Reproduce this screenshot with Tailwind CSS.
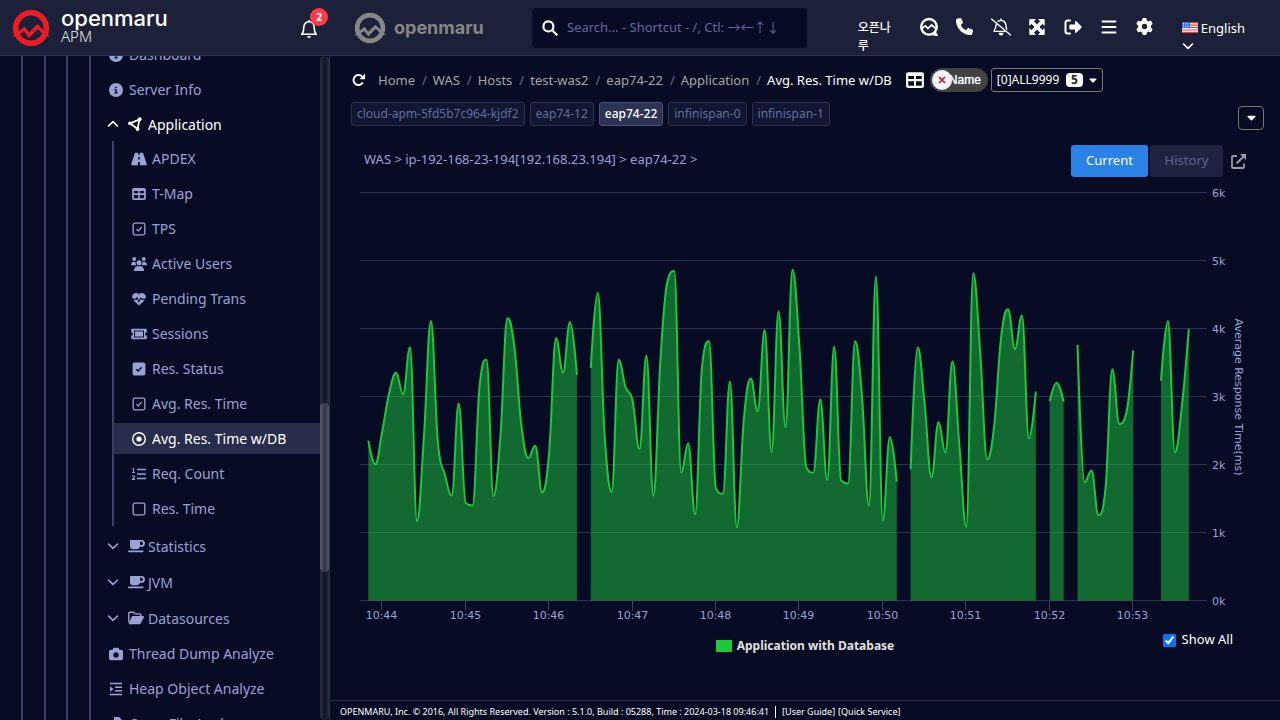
<!DOCTYPE html>
<html lang="en">
<head>
    <meta charset="UTF-8">
    <meta name="viewport" content="width=device-width, initial-scale=1.0">
    <title>OPENMARU APM - Avg. Res. Time w/DB</title>
    <script src="https://cdn.jsdelivr.net/npm/@tailwindcss/browser@4"></script>
</head>
<body class="h-screen flex flex-col overflow-hidden bg-[#070c24] text-white text-[13px] font-['Noto_Sans','Noto_Sans_CJK_KR',sans-serif]">

    <!-- Shared icons -->
    <svg class="hidden">
        <symbol id="i-info" viewBox="0 0 512 512"><path d="M256 512A256 256 0 1 0 256 0a256 256 0 1 0 0 512zM216 336h24V272H216c-13.3 0-24-10.7-24-24s10.7-24 24-24h48c13.3 0 24 10.7 24 24v88h8c13.3 0 24 10.7 24 24s-10.7 24-24 24H216c-13.3 0-24-10.7-24-24s10.7-24 24-24zm40-208a32 32 0 1 1 0 64 32 32 0 1 1 0-64z"/></symbol>
        <symbol id="i-down" viewBox="0 0 12 12"><path d="M1.5 4 6 8.3 10.5 4" fill="none" stroke="currentColor" stroke-width="1.6" stroke-linecap="round" stroke-linejoin="round"/></symbol>
        <symbol id="i-up" viewBox="0 0 12 12"><path d="M1.5 8 6 3.7 10.5 8" fill="none" stroke="currentColor" stroke-width="1.6" stroke-linecap="round" stroke-linejoin="round"/></symbol>
        <symbol id="i-cup" viewBox="0 0 18 14"><path fill-rule="evenodd" d="M3 1h11.500a3.300 3.300 0 0 1 0 6.800H13a3 3 0 0 1-3 2.400H6a3 3 0 0 1-3-3zM13 2.800V6h1.400a1.600 1.600 0 0 0 0-3.200z"/><rect x="1" y="11.500" width="15.500" height="1.700" rx=".8"/></symbol>
        <symbol id="i-check-box" viewBox="0 0 16 16"><rect x="2.200" y="2.200" width="11.600" height="11.600" rx="1.500" fill="none" stroke="currentColor" stroke-width="1.300"/><path d="M5.500 8.200l1.800 1.700 3.300-3.600" fill="none" stroke="currentColor" stroke-width="1.300"/></symbol>
        <symbol id="i-table" viewBox="0 0 16 14"><path fill-rule="evenodd" d="M2 0h12a2 2 0 0 1 2 2v10a2 2 0 0 1-2 2H2a2 2 0 0 1-2-2V2a2 2 0 0 1 2-2zM2 3.500v2.700h5.100V3.500zM8.900 3.500v2.700H14V3.500zM2 8.200V12h5.100V8.200zM8.900 8.200V12H14V8.200z"/></symbol>
        <symbol id="i-caret" viewBox="0 0 10 6"><path d="M1 .5h8a.6.6 0 0 1 .4 1L5.600 5.400a.8.8 0 0 1-1.200 0L.6 1.500A.6.600 0 0 1 1 .5z"/></symbol>
        <symbol id="i-mark" viewBox="0 0 38 38">
            <circle cx="19" cy="19" r="15.300" fill="none" stroke="currentColor" stroke-width="5.600"/>
            <path d="M0 28 12.500 17.500 17 23.500 25.500 15 38 28 32.500 26.500 25.800 20 17 29 12 22.500 5 27z"/>
        </symbol>
    </svg>

    <!-- Header -->
    <header class="h-14 shrink-0 flex items-center bg-[#1c2038] border-b border-[#2b3250]">
        <div class="w-[330px] shrink-0 flex items-center pl-3">
            <a href="#" class="flex items-center gap-[11px]" aria-label="openmaru APM">
                <svg class="size-[38px] fill-current text-[#ed1c24]"><use href="#i-mark"/></svg>
                <span class="flex flex-col">
                    <span class="font-['Inter',sans-serif] font-medium text-[22px] leading-[20px]">openmaru</span>
                    <span class="font-light text-[15px] leading-[16px] pb-1 text-gray-200">APM</span>
                </span>
            </a>
            <button class="relative ml-auto mr-3 size-[18px]" aria-label="Notifications">
                <svg viewBox="0 0 18 20" class="w-[18px] h-5 fill-none stroke-white" stroke-width="1.600" stroke-linejoin="round"><path d="M1 15.200h16M2 15c1.500-1.800 1.800-3.500 1.800-6.500C3.800 5 6 2.800 9 2.800S14.200 5 14.200 8.500c0 3 .3 4.700 1.800 6.500M9 1v1.500"/><path d="M7 17.300h4a2 1.600 0 0 1-4 0z" class="fill-white stroke-none"/></svg>
                <span class="absolute -top-[11px] left-[10px] size-[18px] rounded-full bg-[#ff3b48] text-[10px] leading-[18px] font-bold text-center">2</span>
            </button>
        </div>

        <a href="#" class="flex items-center gap-2 ml-6 w-[178px] text-[#868686]" aria-label="openmaru">
            <svg class="size-8 fill-current"><use href="#i-mark"/></svg>
            <span class="font-['Inter',sans-serif] font-bold text-[18px] leading-6">openmaru</span>
        </a>

        <label class="flex items-center w-[275px] h-10 px-[10px] gap-[9px] rounded bg-[#070c24]">
            <svg viewBox="0 0 16 16" class="size-4 fill-none stroke-white" stroke-width="2.200"><circle cx="6.400" cy="6.400" r="5"/><path d="M10 10l5.300 5.300"/></svg>
            <input type="text" aria-label="Search" placeholder="Search... - Shortcut - /, Ctl: →←↑↓" class="flex-1 min-w-0 bg-transparent outline-none placeholder:text-[#6068a0]">
        </label>

        <div class="ml-auto flex items-center h-full">
            <span class="w-9 mr-[25px] mt-[18px] text-[12px] leading-[18px] font-medium">오픈나루</span>
            <div class="flex items-center gap-4 pb-[2px]">
                <button aria-label="Assistant"><svg viewBox="0 0 20 20" class="size-5 fill-none stroke-white" stroke-width="2.400"><circle cx="10" cy="9.800" r="7.800"/><path d="M2.500 11.500 6.500 8.800 9 11.500 12.500 8 17.500 12" stroke-width="1.700"/><path d="M12.500 17.500 18.500 18.700 16 14" class="fill-white" stroke-width="1"/></svg></button>
                <button aria-label="Call" class="w-5 flex justify-center"><svg viewBox="0 0 512 512" class="size-[17px] fill-white"><path d="M164.900 24.600c-7.700-18.600-28-28.500-47.400-23.200l-88 24C12.100 30.200 0 46 0 64C0 311.400 200.600 512 448 512c18 0 33.800-12.100 38.600-29.500l24-88c5.300-19.400-4.600-39.700-23.200-47.400l-96-40c-16.300-6.800-35.200-2.100-46.300 11.600L304.700 368C234.300 334.700 177.300 277.700 144 207.300L193.300 167c13.700-11.200 18.400-30 11.600-46.300l-40-96z"/></svg></button>
                <button aria-label="Mute alarms"><svg viewBox="0 0 20 18" class="w-5 h-[18px] fill-none stroke-white" stroke-width="1.400" stroke-linecap="round"><path d="M.5 1 19.500 17M5.200 6.200c-.3 3-.5 4.600-1.900 6.200v1h10M7 3.300C9.600 1.300 14.800 2.600 15 7.300c0 1.700.3 2.900.8 3.900M10 1v1"/><path d="M8.500 15.500h3.200a1.600 1.400 0 0 1-3.200 0z" class="fill-white"/></svg></button>
                <button aria-label="Full screen" class="w-5 flex justify-center"><svg viewBox="0 0 16 16" class="size-4 fill-white"><path d="M.8.5h5.400L4.500 2.300 8 5.800l3.500-3.500L9.800.5h5.400v5.700l-1.800-1.700L10 8l3.400 3.500 1.800-1.700v5.700H9.800l1.700-1.800L8 10.200l-3.500 3.500 1.700 1.800H.8V9.800l1.800 1.700L6 8 2.600 4.500.8 6.200z" stroke="white" stroke-width=".9" stroke-linejoin="round"/></svg></button>
                <button aria-label="Log out" class="w-5 flex justify-center"><svg viewBox="0 0 18 16" class="w-[18px] h-4 fill-white"><path d="M6 1.500H3.500a2 2 0 0 0-2 2v9a2 2 0 0 0 2 2H6" fill="none" stroke="white" stroke-width="2" stroke-linecap="round"/><path d="M11 2.900a.8.8 0 0 1 1.300-.6l5 5a1 1 0 0 1 0 1.400l-5 5a.8.8 0 0 1-1.300-.6v-2.600H6.200a.9.900 0 0 1-.9-.9V6.400a.9.900 0 0 1 .9-.9H11z"/></svg></button>
                <button aria-label="Menu" class="w-5 flex justify-center"><svg viewBox="0 0 16 14" class="w-4 h-[14px] stroke-white" stroke-width="1.900" stroke-linecap="round"><path d="M1.500 1.500h13M1.500 7h13M1.500 12.500h13"/></svg></button>
                <button aria-label="Settings" class="w-5 flex justify-center"><svg viewBox="0 0 512 512" class="size-[17px] fill-white"><path d="M495.900 166.600c3.200 8.700 .5 18.400-6.400 24.600l-43.300 39.400c1.100 8.300 1.700 16.800 1.700 25.400s-.6 17.100-1.700 25.400l43.300 39.400c6.900 6.200 9.600 15.900 6.400 24.600c-4.400 11.900-9.700 23.300-15.800 34.300l-4.700 8.100c-6.600 11-14 21.400-22.100 31.200c-5.900 7.200-15.700 9.600-24.500 6.800l-55.700-17.700c-13.400 10.300-28.200 18.900-44 25.400l-12.500 57.100c-2 9.100-9 16.300-18.200 17.800c-13.800 2.300-28 3.500-42.500 3.500s-28.700-1.200-42.500-3.500c-9.200-1.500-16.200-8.700-18.200-17.800l-12.500-57.100c-15.800-6.500-30.600-15.100-44-25.400L83.100 425.900c-8.800 2.800-18.600 .3-24.500-6.800c-8.100-9.800-15.500-20.200-22.100-31.200l-4.700-8.100c-6.100-11-11.400-22.400-15.800-34.300c-3.200-8.700-.5-18.400 6.400-24.600l43.300-39.400C64.600 273.100 64 264.600 64 256s.6-17.100 1.700-25.400L22.400 191.200c-6.900-6.200-9.600-15.900-6.400-24.600c4.400-11.900 9.700-23.300 15.800-34.300l4.700-8.100c6.600-11 14-21.400 22.100-31.200c5.900-7.200 15.700-9.600 24.500-6.800l55.700 17.700c13.400-10.300 28.200-18.900 44-25.400l12.500-57.100c2-9.100 9-16.300 18.200-17.800C227.300 1.200 241.500 0 256 0s28.700 1.200 42.500 3.500c9.200 1.500 16.200 8.700 18.200 17.800l12.500 57.100c15.800 6.500 30.600 15.100 44 25.400l55.700-17.700c8.800-2.800 18.600-.3 24.500 6.800c8.100 9.800 15.500 20.200 22.100 31.200l4.700 8.100c6.100 11 11.400 22.400 15.800 34.300zM256 336a80 80 0 1 0 0-160 80 80 0 1 0 0 160z"/></svg></button>
            </div>
            <button class="ml-[27px] mr-[35px] mt-[18px] text-left leading-[18px]">
                <span class="flex items-center gap-[3px]">
                    <svg viewBox="0 0 16 11" class="w-4 h-[11px]"><path fill="#fff" d="M0 0h16v11H0z"/><path stroke="#f03a32" stroke-width="1.200" d="M0 .6h16M0 3.100h16M0 5.500h16M0 8h16M0 10.400h16"/><path fill="#2f6bea" d="M0 0h8v6.100H0z"/><path stroke="#fff" stroke-width=".9" stroke-dasharray="1 1.200" d="M1 1.500h6.500M1 3.100h6.500M1 4.700h6.500"/></svg>
                    English
                </span>
                <svg class="size-3 h-[18px]"><use href="#i-down"/></svg>
            </button>
        </div>
    </header>

    <div class="flex flex-1 min-h-0">
        <!-- Sidebar -->
        <aside class="w-[330px] shrink-0 flex border-r border-[#2b3250]">
            <nav class="flex-1 min-w-0 overflow-hidden text-[14px] text-[#99a2d3]">
                <div class="ml-[21px] border-l-2 border-[#3a4163]">
                <div class="ml-[21px] border-l-2 border-[#3a4163]">
                <div class="ml-5 border-l-2 border-[#3a4163]">
                <div class="ml-[21px] border-l-2 border-[#3a4163]">
                    <div class="-mt-[19px]">
                        <a href="#" class="flex items-center gap-[5px] h-[35px] pl-[17px]"><svg class="w-4 h-[14px] fill-current"><use href="#i-info"/></svg>Dashboard</a>
                        <a href="#" class="flex items-center gap-[5px] h-[35px] pl-[17px]"><svg class="w-4 h-[14px] fill-current"><use href="#i-info"/></svg>Server Info</a>
                        <a href="#" class="flex items-center h-[34px] pl-4 text-white">
                            <svg class="size-3 mr-2"><use href="#i-up"/></svg>
                            <svg viewBox="0 0 16 16" class="size-4 mr-[5px] fill-current"><path d="M3 7.300 12.500 3.500 10.500 13z" fill="none" stroke="currentColor" stroke-width="1.800"/><circle cx="3" cy="7.300" r="1.900"/><circle cx="12.700" cy="3.200" r="1.900"/><circle cx="10.500" cy="13" r="1.900"/></svg>Application
                        </a>
                        <div class="ml-[21px] mb-[2px] py-[2px] flex flex-col gap-1 border-l-2 border-[#3a4163]">
                            <a href="#" class="flex items-center gap-[5px] h-[31px] pl-[17px]"><svg viewBox="0 0 16 14" class="w-4 h-[14px] fill-current"><path fill-rule="evenodd" d="M4 .8h3.200v2h1.600v-2H12l3.800 11.400a.8.8 0 0 1-.8 1H9V10H7v3.200H1a.8.8 0 0 1-.8-1zM7.200 5v2.600h1.600V5z"/></svg>APDEX</a>
                            <a href="#" class="flex items-center gap-[5px] h-[31px] pl-[17px]"><svg class="w-4 h-3 fill-current"><use href="#i-table"/></svg>T-Map</a>
                            <a href="#" class="flex items-center gap-[5px] h-[31px] pl-[17px]"><svg class="size-4"><use href="#i-check-box"/></svg>TPS</a>
                            <a href="#" class="flex items-center gap-[5px] h-[31px] pl-[17px]"><svg viewBox="0 0 16 14" class="w-4 h-[14px] fill-current"><circle cx="3.200" cy="2" r="1.900"/><circle cx="12.800" cy="2" r="1.900"/><circle cx="8" cy="5.700" r="2.500"/><path d="M0 8.300C0 6 1.200 4.800 3 4.800c.8 0 1.400.2 1.700.5-.3 1.200 0 2.100.8 3zM16 8.300c0-2.300-1.200-3.500-3-3.500-.8 0-1.400.2-1.700.5.3 1.200 0 2.100-.8 3zM3 14c0-3 1.300-4.800 3.600-4.800h2.800C11.700 9.200 13 11 13 14z"/></svg>Active Users</a>
                            <a href="#" class="flex items-center gap-[5px] h-[31px] pl-[17px]"><svg viewBox="0 0 16 14" class="w-4 h-[14px] fill-current"><path d="M8 2.500C9.500.5 12 .6 13.500 2c1.400 1.300 1.600 3 .9 4.600h-3.700L9.800 4.900l-1.900 3.600-1.700-4-1.300 2.100H1.600C.9 5 1.100 3.300 2.500 2 4 .6 6.500.5 8 2.500z"/><path d="M2.300 7.800h3.200l.6-.9 1.700 4 2-3.800.3.700h3.600c-.7 1.300-3 3.400-5.100 5.300a.9.900 0 0 1-1.200 0C5.300 11.200 3 9.100 2.300 7.800z"/></svg>Pending Trans</a>
                            <a href="#" class="flex items-center gap-[5px] h-[31px] pl-[17px]"><svg viewBox="0 0 16 12" class="w-4 h-3 fill-current"><path fill-rule="evenodd" d="M1.500.8h13a1.300 1.300 0 0 1 1.300 1.300v2.200a1.700 1.700 0 0 0 0 3.400v2.200a1.300 1.300 0 0 1-1.300 1.300h-13A1.300 1.300 0 0 1 .2 9.900V7.700a1.700 1.700 0 0 0 0-3.400V2.100A1.300 1.300 0 0 1 1.500.8zM3 2.500v7h10v-7z"/><rect x="4" y="3.400" width="8" height="5.200"/></svg>Sessions</a>
                            <a href="#" class="flex items-center gap-[5px] h-[31px] pl-[17px]"><svg viewBox="0 0 16 16" class="size-4 fill-current"><rect x="1.600" y="1.600" width="12.800" height="12.800" rx="2"/><path d="M5.300 8.200l1.900 1.800 3.500-3.700" fill="none" stroke="#070c24" stroke-width="1.500"/></svg>Res. Status</a>
                            <a href="#" class="flex items-center gap-[5px] h-[31px] pl-[17px]"><svg class="size-4"><use href="#i-check-box"/></svg>Avg. Res. Time</a>
                            <a href="#" class="flex items-center gap-[5px] h-[31px] pl-[17px] bg-[#272d4a] text-white"><svg viewBox="0 0 16 16" class="size-4 fill-current"><circle cx="8" cy="8" r="6.300" fill="none" stroke="currentColor" stroke-width="1.400"/><circle cx="8" cy="8" r="2.600"/></svg>Avg. Res. Time w/DB</a>
                            <a href="#" class="flex items-center gap-[5px] h-[31px] pl-[17px]"><svg viewBox="0 0 16 14" class="w-4 h-[14px] fill-none stroke-current" stroke-width="1.500"><path d="M6 2.500h9M6 7h9M6 11.500h9"/><path d="M1.500 1.500h1v4M1.200 5.500h2.800M1.300 9.300C2 8.300 3.600 8.700 3.400 9.800 3.300 10.500 2 11.500 1.500 12.400h2.600" stroke-width="1.100"/></svg>Req. Count</a>
                            <a href="#" class="flex items-center gap-[5px] h-[31px] pl-[17px]"><svg viewBox="0 0 16 16" class="size-4"><rect x="2.200" y="2.200" width="11.600" height="11.600" rx="1.500" fill="none" stroke="currentColor" stroke-width="1.300"/></svg>Res. Time</a>
                        </div>
                        <a href="#" class="flex items-center h-9 pl-4"><svg class="size-3 mr-2"><use href="#i-down"/></svg><svg class="w-[18px] h-[14px] mr-[3px] fill-current"><use href="#i-cup"/></svg>Statistics</a>
                        <a href="#" class="flex items-center h-9 pl-4"><svg class="size-3 mr-2"><use href="#i-down"/></svg><svg class="w-[18px] h-[14px] mr-[3px] fill-current"><use href="#i-cup"/></svg>JVM</a>
                        <a href="#" class="flex items-center h-9 pl-4"><svg class="size-3 mr-2"><use href="#i-down"/></svg><svg viewBox="0 0 18 14" class="w-[18px] h-[14px] mr-[3px] fill-current"><path d="M1.800 11.500V2.300a1 1 0 0 1 1-1h3.400l1.700 1.600h5a1 1 0 0 1 1 1V5" fill="none" stroke="currentColor" stroke-width="1.400"/><path d="M5 5h11.200a.8.8 0 0 1 .7 1.200l-3.300 6.200a1.500 1.500 0 0 1-1.300.8H1.500z"/></svg>Datasources</a>
                        <a href="#" class="flex items-center gap-[5px] h-[35px] pl-[17px]"><svg viewBox="0 0 16 14" class="w-4 h-[14px] fill-current"><path fill-rule="evenodd" d="M5.500.8h5l.8 2H13A2 2 0 0 1 15 4.800v6.400a2 2 0 0 1-2 2H3a2 2 0 0 1-2-2V4.800a2 2 0 0 1 2-2h1.700zM8 5.200a2.700 2.700 0 1 0 0 5.400 2.700 2.700 0 0 0 0-5.400z"/></svg>Thread Dump Analyze</a>
                        <a href="#" class="flex items-center gap-[5px] h-[35px] pl-[17px]"><svg viewBox="0 0 16 14" class="w-4 h-[14px] fill-current"><path d="M2 1.500h12M7 5.200h7M7 8.800h7M2 12.500h12" stroke="currentColor" stroke-width="1.600"/><path d="M2 4.200v5.600L5.500 7z"/></svg>Heap Object Analyze</a>
                        <a href="#" class="flex items-center gap-[5px] h-[35px] pl-[17px]"><svg viewBox="0 0 16 14" class="w-4 h-[14px] fill-current"><path d="M6 0h5l3 3v8H6zM2 3h3v9h6v2H2z"/></svg>Open File Analyze</a>
                    </div>
                </div>
                </div>
                </div>
                </div>
            </nav>
            <div class="w-[9px] rounded-full bg-linear-to-r from-[#2b2e3d] via-[#12162a] to-[#262a3c]">
                <div class="h-[169px] mt-[347px] rounded-full bg-linear-to-r from-[#5b5d68] via-[#33364a] to-[#53555f]"></div>
            </div>
        </aside>

        <!-- Content -->
        <main class="flex-1 min-w-0 flex flex-col">
            <div class="flex items-center h-6 mt-3 pl-[21px] whitespace-nowrap">
                <button aria-label="Refresh" class="mr-3"><svg viewBox="0 0 14 14" class="w-[15px] h-[14px] fill-white"><path d="M11.300 9.600A5 5 0 1 1 10.800 3.800" fill="none" stroke="white" stroke-width="2"/><path d="M13.500.8v5.400H8z"/></svg></button>
                <nav class="flex pt-px text-[#a6a6a6]">
                    <a href="#">Home</a><span class="pl-[7px] pr-[6px] text-[#6b6e7c]">/</span>
                    <a href="#">WAS</a><span class="pl-[7px] pr-[6px] text-[#6b6e7c]">/</span>
                    <a href="#">Hosts</a><span class="pl-[7px] pr-[6px] text-[#6b6e7c]">/</span>
                    <a href="#">test-was2</a><span class="pl-[7px] pr-[6px] text-[#6b6e7c]">/</span>
                    <a href="#">eap74-22</a><span class="pl-[7px] pr-[6px] text-[#6b6e7c]">/</span>
                    <a href="#">Application</a><span class="pl-[7px] pr-[6px] text-[#6b6e7c]">/</span>
                    <span class="text-white">Avg. Res. Time w/DB</span>
                </nav>
                <button aria-label="Table view" class="ml-[14px] mr-[6px]"><svg class="w-[18px] h-4 fill-white"><use href="#i-table"/></svg></button>
                <button class="relative w-[58px] h-6 rounded-full bg-[#424242] pr-[7px] text-right text-[12px] font-['Liberation_Sans',sans-serif] [text-shadow:0_0_1px_white]">Name
                    <span class="absolute left-[2px] top-[2px] size-5 rounded-full bg-[#f4f4f4] flex items-center justify-center"><svg viewBox="0 0 8 8" class="size-2 stroke-[#c4153a]" stroke-width="1.700"><path d="M1 1l6 6M7 1L1 7"/></svg></span>
                </button>
                <button class="flex items-center w-[112px] h-6 ml-[3px] px-[5px] border border-[#77776f] rounded-[3px] text-[12px]">
                    [0]ALL9999
                    <span class="ml-auto w-[17px] h-[14px] rounded bg-white text-[#222] font-bold leading-[14px]">5</span>
                    <svg class="w-2 h-[5px] ml-[6px] fill-white"><use href="#i-caret"/></svg>
                </button>
            </div>

            <div class="flex mt-[10px] pl-[21px] pr-4 text-[12px] text-[#656d9e]">
                <div class="flex gap-[5px]">
                    <button class="h-6 px-[5px] border border-[#2b3250] rounded-[3px] bg-[#111730]">cloud-apm-5fd5b7c964-kjdf2</button>
                    <button class="h-6 px-[5px] border border-[#2b3250] rounded-[3px] bg-[#111730]">eap74-12</button>
                    <button class="h-6 px-[5px] border border-[#4a5175] rounded-[3px] bg-[#2d3352] text-white font-medium">eap74-22</button>
                    <button class="h-6 px-[5px] border border-[#2b3250] rounded-[3px] bg-[#111730]">infinispan-0</button>
                    <button class="h-6 px-[5px] border border-[#2b3250] rounded-[3px] bg-[#111730]">infinispan-1</button>
                </div>
                <button aria-label="More" class="ml-auto mt-1 w-[26px] h-6 flex items-center justify-center border border-[#77776f] rounded"><svg class="w-[9px] h-[6px] fill-white"><use href="#i-caret"/></svg></button>
            </div>

            <div class="flex items-center mt-[15px] pl-[34px] pr-[34px]">
                <p class="text-[#99a2d3] pb-[2px]">WAS &gt; ip-192-168-23-194[192.168.23.194] &gt; eap74-22 &gt;</p>
                <button class="ml-auto w-[77px] h-8 rounded-[3px] bg-[#2b82e6]">Current</button>
                <button class="ml-[2px] w-[73px] h-8 rounded-[3px] bg-[#1e2440] text-[#5e6596]">History</button>
                <button aria-label="Open in new window" class="ml-2"><svg viewBox="0 0 15 15" class="size-[15px] fill-none stroke-[#9a9ca8]" stroke-width="1.800"><path d="M6 2H2a1 1 0 0 0-1 1v10a1 1 0 0 0 1 1h10a1 1 0 0 0 1-1V9.500M5.500 9.500 13 2"/><path d="M9 0h6v6z" class="fill-[#9a9ca8] stroke-none"/></svg></button>
            </div>

            <!-- Chart -->
            <svg id="chart" viewBox="0 0 950 451" class="w-full h-auto font-['DejaVu_Sans',sans-serif] text-[11px] fill-[#99a2d3]" role="img" aria-label="Average Response Time"></svg>

            <div class="grid grid-cols-[1fr_auto_1fr] items-start">
                <div></div>
                <div class="flex items-center gap-[5px] mt-[9px] text-[12px] leading-[18px] font-bold text-[#e0e0e0]"><span class="w-4 h-3 bg-[#1ec83b]"></span>Application with Database</div>
                <label class="justify-self-end flex items-center gap-[6px] mr-[47px] mt-[2px] leading-[18px]"><input type="checkbox" checked class="size-[13px] mt-[2px] accent-[#0075ff]">Show All</label>
            </div>

            <footer class="mt-auto h-5 shrink-0 flex items-center pl-[10px] pt-[2px] border-t border-[#2b3250] text-[9px]">
                OPENMARU, Inc. © 2016, All Rights Reserved. Version : 5.1.0, Build : 05288, Time : 2024-03-18 09:46:41
                <span class="w-px h-3 mx-[6px] bg-white"></span>
                <a href="#" class="mr-[3px]">[User Guide]</a><a href="#">[Quick Service]</a>
            </footer>
        </main>
    </div>

    <script>
        // Average response time in ms, one sample every 5 seconds (null = no data)
        const data = [
            2350, 2002, 2484, 3050, 3350, 3035, 3724, 1166, 2410, 4112, 2336, 1854, 1545, 2897, 1436, 1397,
            3148, 3542, 1535, 2410, 4151, 3738, 2582, 2095, 2277, 1589, 2164, 3856, 3350, 4097, 3320, null,
            3419, 4525, 2410, 1599, 3542, 3138, 2941, 2228, 3601, 1545, 3517, 4683, 4845, 1879, 2312, 1264,
            3443, 3812, 1648, 1569, 3222, 1077, 2656, 3266, 2784, 3979, 2184, 4255, 2548, 4865, 3738, 1958,
            1879, 2961, 1771, 3733, 1761, 1722, 3812, 3000, 1392, 4766, 1176, 2405, 1746, null, 1928, 3724,
            2902, 1810, 2622, 2174, 3517, 2287, 1082, 4811, 3640, 2076, 2558, 3861, 4284, 3699, 4191, 2381,
            3074, null, 2932, 3197, 2922, null, 3758, 1736, 1913, 1254, 1623, 3399, 2597, 2755, 3679, null,
            null, null, 3232, 4112, 2179, 2853, 3994
        ];

        // Control points of a spline that does not overshoot its neighbours
        function segment(prev, p, next) {
            const s = 1.5, d = s + 1;
            if (!prev || !next) return { lx: p.x, ly: p.y, rx: p.x, ry: p.y };
            let lx = (s * p.x + prev.x) / d, ly = (s * p.y + prev.y) / d;
            let rx = (s * p.x + next.x) / d, ry = (s * p.y + next.y) / d;
            const corr = (ry - ly) * (rx - p.x) / (rx - lx) + p.y - ry;
            ly += corr;
            ry += corr;
            if (ly > prev.y && ly > p.y) { ly = Math.max(prev.y, p.y); ry = 2 * p.y - ly; }
            else if (ly < prev.y && ly < p.y) { ly = Math.min(prev.y, p.y); ry = 2 * p.y - ly; }
            if (ry > next.y && ry > p.y) { ry = Math.max(next.y, p.y); ly = 2 * p.y - ry; }
            else if (ry < next.y && ry < p.y) { ry = Math.min(next.y, p.y); ly = 2 * p.y - ry; }
            return { lx, ly, rx, ry };
        }

        function draw() {
            const left = 30, right = 877, top = 15.5, bottom = 423.5;
            const first = left + 8.3, step = (right - 18.2 - first) / (data.length - 1);
            let out = '';

            for (let k = 0; k <= 6; k++) {
                const y = Math.round(bottom - (bottom - top) * k / 6) - 0.5;
                out += `<path d="M${left} ${y}H${right}" stroke="#2d3452"/>`;
                out += `<text x="${right + 5}" y="${y + 4.5}">${k}k</text>`;
            }
            for (let m = 0; m < 10; m++) {
                const x = Math.round(first + step * (2 + m * 12)) - 0.5;
                out += `<path d="M${x} ${bottom}v10" stroke="#3a4163"/>`;
                out += `<text x="${x}" y="${bottom + 18}" text-anchor="middle">10:${44 + m}</text>`;
            }

            const runs = [[]];
            data.forEach((v, i) => {
                if (v === null) { runs.push([]); return; }
                runs[runs.length - 1].push({ x: first + step * i, y: bottom - (bottom - top) * v / 6000 });
            });
            runs.filter(r => r.length).forEach(r => {
                const c = r.map((p, i) => segment(r[i - 1], p, r[i + 1]));
                let d = `M${r[0].x} ${r[0].y}`;
                for (let i = 1; i < r.length; i++) {
                    d += `C${c[i - 1].rx} ${c[i - 1].ry} ${c[i].lx} ${c[i].ly} ${r[i].x} ${r[i].y}`;
                }
                out += `<path d="${d}V${bottom}H${r[0].x}Z" fill="#1ec83b" fill-opacity=".5"/>`;
                out += `<path d="${d}" fill="none" stroke="#1ec83b" stroke-width="2" stroke-linejoin="round"/>`;
            });

            out += `<text transform="translate(${right + 28} 220) rotate(90)" text-anchor="middle">Average Response Time(ms)</text>`;
            document.getElementById('chart').innerHTML = out;
        }

        draw();
    </script>
</body>
</html>
